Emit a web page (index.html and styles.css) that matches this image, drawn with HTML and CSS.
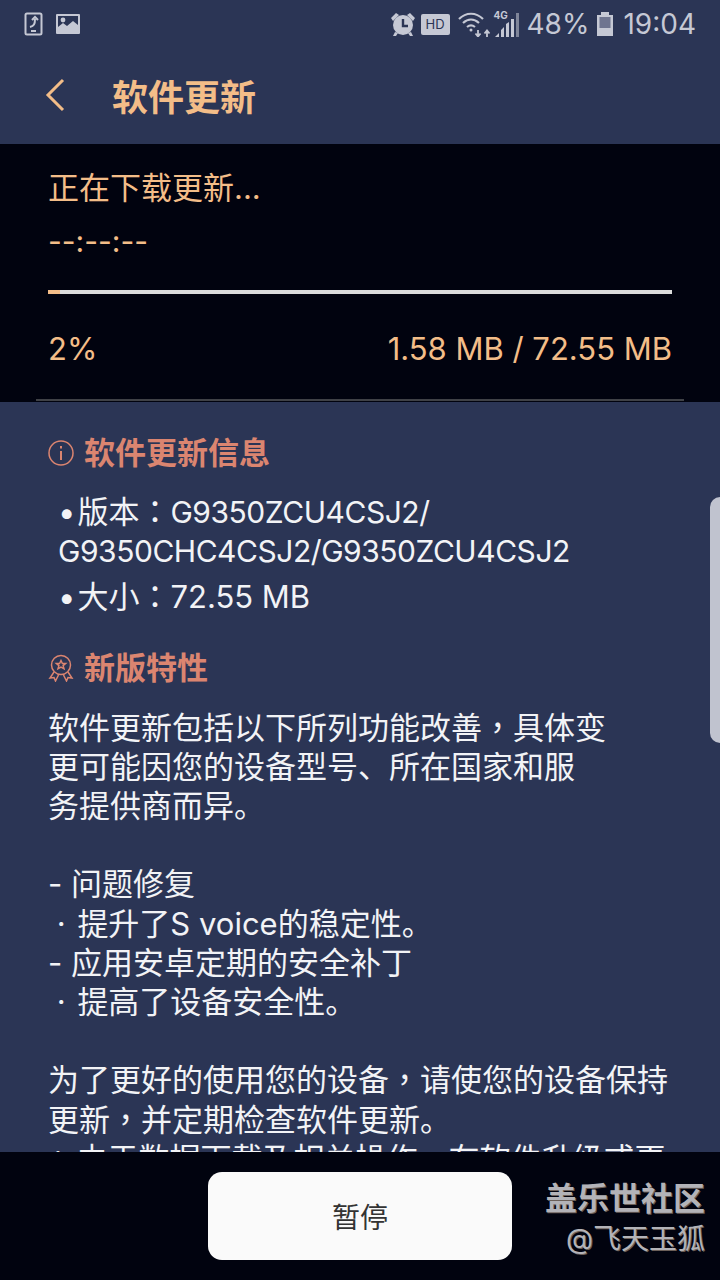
FILE: index.html
```html
<!DOCTYPE html>
<html lang="en">

<head>
    <meta charset="UTF-8">
    <meta name="viewport" content="width=device-width, initial-scale=1.0">
    <title>软件更新</title>
    <link rel="stylesheet" href="styles.css">
</head>

<body>
    <div class="screen">
        <div class="status">
            <div class="status-left">
                <svg width="20" height="24" viewBox="0 0 20 24" fill="none" stroke="#c5c8d4" stroke-width="2">
                    <rect x="1.5" y="1.5" width="16" height="21" rx="1.5" />
                    <path d="M6 15c4-1 5-3 5-8M8 8l3-3 3 3M7 19h5" />
                </svg>
                <svg width="24" height="22" viewBox="0 0 24 22">
                    <path fill="#c5c8d4" fill-rule="evenodd" d="M1 1h22a1 1 0 0 1 1 1v18a1 1 0 0 1-1 1H1a1 1 0 0 1-1-1V2a1 1 0 0 1 1-1zm1 2v11l5-4 4 3 6-5 5 4V3z" />
                    <circle cx="7" cy="7" r="2.4" fill="#c5c8d4" />
                </svg>
            </div>
            <div class="status-right">
                <svg class="st-alarm" width="26" height="26" viewBox="0 0 26 26">
                    <circle cx="13" cy="14" r="10" fill="#c5c8d4" />
                    <path d="M13 8v7h5" fill="none" stroke="#2b3555" stroke-width="2.4" />
                    <path d="M1 7l5-5 3 2-6 6zM25 7l-5-5-3 2 6 6zM5 21l-2 4h3l2-3zM21 21l2 4h-3l-2-3z" fill="#c5c8d4" />
                </svg>
                <span class="hd">HD</span>
                <svg class="st-wifi" width="34" height="26" viewBox="0 0 34 26" fill="none" stroke="#c5c8d4" stroke-width="2.2">
                    <path d="M1 8c7-7 17-7 24 0M5 12c5-4.500 11-4.500 16 0M9 16c2.500-2 5.500-2 8 0" />
                    <circle cx="13" cy="19" r="1.500" fill="#c5c8d4" stroke="none" />
                    <path d="M20 19v6M17.500 22.500l2.500 3 2.500-3M29 26v-6M26.500 22.500l2.500-3 2.500 3" stroke-width="1.800" />
                </svg>
                <div class="signal">
                    <span class="lte">4G</span>
                    <svg width="26" height="26" viewBox="0 0 26 26">
                        <path fill="#c5c8d4" d="M1 26l4-4v4zM7 26v-7l3-3v10zM12 26V13l3-2v15zM17 26V8h3v18z" />
                        <path fill="#7f8599" d="M22 26V2h3v24z" />
                    </svg>
                </div>
                <span class="pct">48%</span>
                <svg class="st-batt" width="16" height="24" viewBox="0 0 16 24">
                    <path fill="#c5c8d4" d="M4 0h8v3h4v21H0V3h4z" />
                    <rect x="2.500" y="5" width="11" height="11" fill="#6f7590" />
                </svg>
                <span class="clock">19:04</span>
            </div>
        </div>

        <div class="topbar">
            <svg class="back" width="20" height="34" viewBox="0 0 20 34" fill="none" stroke="#f3bd88" stroke-width="3">
                <path d="M18 2L3 17l15 15" />
            </svg>
            <h1>软件更新</h1>
        </div>

        <div class="download">
            <p class="dl-title">正在下载更新...</p>
            <p class="dl-time">--:--:--</p>
            <div class="bar"><div class="bar-fill" style="width: 2%"></div></div>
            <div class="dl-row">
                <span>2%</span>
                <span>1.58 MB / 72.55 MB</span>
            </div>
            <div class="dl-line"></div>
        </div>

        <div class="content">
            <h2 class="info-head">
                <svg width="26" height="26" viewBox="0 0 26 26" fill="none" stroke="#db8570" stroke-width="1.500">
                    <circle cx="13" cy="13" r="12" />
                    <path d="M13 11v9M13 6v2.500" stroke-width="2" />
                </svg>
                软件更新信息
            </h2>
            <ul class="facts">
                <li>版本<span class="pn">：</span><span class="lat">G9350ZCU4CSJ2/<br>G9350CHC4CSJ2/G9350ZCU4CSJ2</span></li>
                <li>大小<span class="pn">：</span>72.55 MB</li>
            </ul>
            <h2 class="new-head">
                <svg width="26" height="28" viewBox="0 0 26 28" fill="none" stroke="#db8570" stroke-width="1.500">
                    <circle cx="13" cy="11" r="9.500" />
                    <path d="M13 6.500l1.400 3h3.200l-2.500 2.100.9 3.200-3-1.700-3 1.700.9-3.200-2.500-2.100h3.200z" />
                    <path d="M6 18l-4 6 4-.5 1.500 3.500 3-6M20 18l4 6-4-.5-1.500 3.500-3-6" />
                </svg>
                新版特性
            </h2>
            <p class="notes">软件更新包括以下所列功能改善<span class="pn">，</span>具体变<br>更可能因您的设备型号、所在国家和服<br>务提供商而异。<br><br>- 问题修复<br>&nbsp;· <span class="ind">提升了S voice的稳定性。</span><br>- 应用安卓定期的安全补丁<br>&nbsp;· <span class="ind">提高了设备安全性。</span><br><br>为了更好的使用您的设备<span class="pn">，</span>请使您的设备保持<br>更新<span class="pn">，</span>并定期检查软件更新。<br>※ 由于数据下载及相关操作<span class="pn">，</span>在软件升级或更</p>
            <div class="scroll-handle"></div>
        </div>

        <div class="footer">
            <button class="pause">暂停</button>
            <div class="mark">
                <div class="mark-name">盖乐世社区</div>
                <div class="mark-user">@飞天玉狐</div>
            </div>
        </div>
    </div>
</body>

</html>
```

FILE: styles.css
```css
* {
    box-sizing: border-box;
}

body {
    margin: 0;
    background: #2b3555;
    font-family: Inter, "Noto Sans CJK SC", sans-serif;
}

p,
h1,
h2,
ul {
    margin: 0;
    padding: 0;
}

.screen {
    width: 720px;
    height: 1280px;
    display: flex;
    flex-direction: column;
    overflow: hidden;
}

/* Status bar */
.status {
    height: 48px;
    flex: none;
    display: flex;
    justify-content: space-between;
    align-items: center;
    padding: 0 24px;
    color: #c5c8d4;
}

.status-left,
.status-right {
    display: flex;
    align-items: center;
}

.status-left {
    gap: 12px;
}

.hd {
    width: 29px;
    height: 21px;
    margin: 0 8px 0 5px;
    border-radius: 2px;
    background: #c5c8d4;
    color: #2b3555;
    font-size: 13px;
    line-height: 21px;
    text-align: center;
}

.st-wifi {
    margin-right: 2px;
}

.signal {
    position: relative;
}

.signal svg {
    display: block;
}

.lte {
    position: absolute;
    left: 0;
    top: -2px;
    font-size: 10px;
    font-weight: bold;
}

.pct,
.clock {
    font-size: 28px;
    line-height: 48px;
}

.pct {
    margin-left: 7px;
}

.st-batt {
    margin: 0 10px 0 8px;
}

/* Title bar */
.topbar {
    height: 96px;
    flex: none;
    display: flex;
    align-items: center;
    padding: 0 0 2px 45px;
    color: #f3bd88;
}

.back {
    margin-right: 47px;
}

.topbar h1 {
    font-size: 36px;
    font-weight: 700;
}

/* Download panel */
.download {
    height: 258px;
    flex: none;
    padding: 24px 48px 0;
    background: #01030f;
    color: #f3bd88;
    font-size: 31px;
}

.dl-title {
    line-height: 40px;
}

.dl-time {
    margin-top: 13px;
    font-size: 30px;
    line-height: 40px;
}

.bar {
    height: 4px;
    margin-top: 29px;
    background: #dcdcdc;
}

.bar-fill {
    height: 100%;
    background: #f3bd88;
}

.dl-row {
    display: flex;
    justify-content: space-between;
    margin-top: 34px;
    line-height: 42px;
}

.dl-line {
    height: 2px;
    margin: 29px -12px 0;
    background: #3f4146;
}

/* Scrolling info */
.content {
    position: relative;
    flex: 1;
    min-height: 0;
    padding: 30px 48px 0;
    overflow: hidden;
    color: #f2f3f6;
    font-size: 31px;
    line-height: 39.2px;
}

.content h2 {
    display: flex;
    align-items: center;
    gap: 10px;
    color: #db8570;
    font-size: 31px;
    font-weight: 700;
    line-height: 42px;
}

/* centered full-width punctuation, as on the device */
.pn {
    font-family: "Noto Sans CJK TC", sans-serif;
    line-height: 1;
}

.lat {
    font-size: 30px;
    line-height: 1;
    letter-spacing: -0.46px;
}

.ind {
    margin-left: 3px;
}

.facts {
    list-style: none;
    margin-top: 18px;
}

.facts li {
    padding-left: 10px;
    margin-bottom: 7px;
}

.facts li::before {
    content: "•";
    margin-right: 2px;
}

.new-head {
    margin-top: 30px;
}

.notes {
    margin-top: 19px;
}

.scroll-handle {
    position: absolute;
    right: 0;
    top: 95px;
    width: 10px;
    height: 246px;
    border-radius: 10px 0 0 10px;
    background: #c0c3cf;
}

/* Bottom bar */
.footer {
    position: relative;
    height: 128px;
    flex: none;
    display: flex;
    justify-content: center;
    align-items: center;
    background: #01030f;
}

.pause {
    width: 304px;
    height: 88px;
    border: none;
    border-radius: 14px;
    background: #fafafa;
    color: #333;
    font-family: inherit;
    font-size: 28px;
}

.mark {
    position: absolute;
    right: 15px;
    top: 28px;
    text-align: right;
    color: #b3b3b8;
    text-shadow: 1px 1px 0 #6b5f58;
}

.mark-name {
    font-size: 32px;
    font-weight: bold;
    line-height: 38px;
}

.mark-user {
    margin-top: 3px;
    font-size: 28px;
    line-height: 36px;
}
```
